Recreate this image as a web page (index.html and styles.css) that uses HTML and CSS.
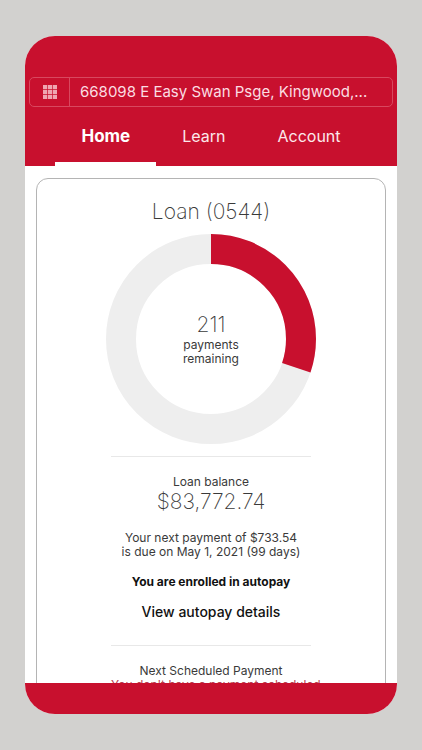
FILE: index.html
```html
<!DOCTYPE html>
<html lang="en">
<head>
<meta charset="utf-8">
<meta name="viewport" content="width=device-width, initial-scale=1">
<title>Loan overview</title>
<link rel="stylesheet" href="styles.css">
</head>
<body>
<div class="phone">
  <header class="header">
    <div class="property">
      <button class="property-menu" type="button" aria-label="All properties">
        <svg class="grid-icon" viewBox="0 0 14 14" aria-hidden="true">
          <path d="M0 0h4.2v4.2H0zM4.9 0h4.2v4.2H4.9zM9.8 0H14v4.2H9.8zM0 4.9h4.2v4.2H0zM4.9 4.9h4.2v4.2H4.9zM9.8 4.9H14v4.2H9.8zM0 9.8h4.2V14H0zM4.9 9.8h4.2V14H4.9zM9.8 9.8H14V14H9.8z"/>
        </svg>
      </button>
      <button class="property-address" type="button">668098 E Easy Swan Psge, Kingwood,...</button>
    </div>
    <nav class="tabs">
      <a class="tab tab-active" href="#home" aria-current="page">Home</a>
      <a class="tab" href="#learn">Learn</a>
      <a class="tab" href="#account">Account</a>
    </nav>
  </header>
  <main class="content">
    <section class="card">
      <h1 class="title">Loan (0544)</h1>
      <div class="donut">
        <svg class="donut-chart" viewBox="0 0 210 210" aria-hidden="true">
          <circle class="donut-track" cx="105" cy="105" r="90"/>
          <circle class="donut-value" cx="105" cy="105" r="90" pathLength="1000" stroke-dasharray="302 698" transform="rotate(-90 105 105)"/>
        </svg>
        <p class="donut-label"><span class="count">211</span><span>payments</span><span>remaining</span></p>
      </div>
      <div class="section">
        <h2 class="label">Loan balance</h2>
        <p class="balance">$83,772.74</p>
        <p class="next">Your next payment of $733.54<br>is due on May 1, 2021 (99 days)</p>
        <p class="enrolled">You are enrolled in autopay</p>
        <a class="details" href="#autopay">View autopay details</a>
      </div>
      <div class="section">
        <h2 class="label">Next Scheduled Payment</h2>
        <p class="notice">You don't have a payment scheduled</p>
      </div>
    </section>
  </main>
  <footer class="footer"></footer>
</div>
</body>
</html>
```
FILE: styles.css
```css
* {
  box-sizing: border-box;
}

body {
  margin: 0;
  height: 100vh;
  padding: 36px 25px;
  background: #d2d1cf;
  color: #3a3a3a;
  font-family: Inter, "Liberation Sans", sans-serif;
  font-size: 12px;
  line-height: 14px;
}

h1, h2, p {
  margin: 0;
  font-weight: 400;
}

.phone {
  display: flex;
  flex-direction: column;
  height: 100%;
  overflow: hidden;
  border-radius: 30px;
  background: #fff;
}

.header {
  flex: none;
  padding: 41px 4px 0;
  background: #c8102e;
}

.property {
  display: flex;
  height: 30px;
  border: 1px solid #d8485f;
  border-radius: 5px;
}

.property button {
  border: 0;
  background: none;
  color: #fbdde2;
  font: inherit;
}

.property .property-menu {
  display: flex;
  align-items: center;
  justify-content: center;
  width: 40px;
  padding: 0;
  border-right: 1px solid #d8485f;
}

.grid-icon {
  width: 14px;
  height: 14px;
  fill: #efa5b1;
}

.property .property-address {
  flex: 1;
  min-width: 0;
  padding: 0 10px;
  overflow: hidden;
  font-size: 15px;
  text-align: left;
  text-overflow: ellipsis;
  white-space: nowrap;
}

.tabs {
  display: flex;
  justify-content: center;
}

.tab {
  height: 59px;
  padding: 0 26px;
  border-bottom: 4px solid transparent;
  color: #fce8eb;
  font-size: 16px;
  line-height: 58px;
  text-decoration: none;
}

.tab-active {
  border-color: #fff;
  color: #fff;
  font-size: 17px;
  font-weight: 700;
}

.content {
  flex: 1;
  min-height: 0;
  padding: 12px 11px;
  overflow: hidden;
}

.card {
  display: flex;
  flex-direction: column;
  align-items: center;
  padding: 20px 0;
  border: 1px solid #b4b4b4;
  border-radius: 12px;
  text-align: center;
}

.title,
.balance,
.count {
  font-size: 21px;
  font-weight: 200;
  line-height: 26px;
}

.donut {
  display: grid;
  place-items: center;
  width: 210px;
  margin: 9px 0 12px;
}

.donut-chart,
.donut-label {
  grid-area: 1 / 1;
}

.donut-chart {
  display: block;
  width: 100%;
  fill: none;
  stroke-width: 30;
}

.donut-track {
  stroke: #eee;
}

.donut-value {
  stroke: #c8102e;
}

.donut-label {
  display: flex;
  flex-direction: column;
}

.section {
  width: 200px;
  padding-top: 18px;
  border-top: 1px solid #e8e8e8;
  white-space: nowrap;
}

.label {
  font-size: 12px;
}

.next {
  margin-top: 16px;
}

.enrolled {
  margin-top: 16px;
  color: #111;
  font-weight: 700;
}

.details {
  display: block;
  margin: 14px 0 24px;
  color: #111;
  font-size: 14px;
  font-weight: 500;
  line-height: 18px;
  text-decoration: none;
}

.notice {
  color: #b8404f;
}

.footer {
  flex: none;
  height: 31px;
  background: #c8102e;
}
```
